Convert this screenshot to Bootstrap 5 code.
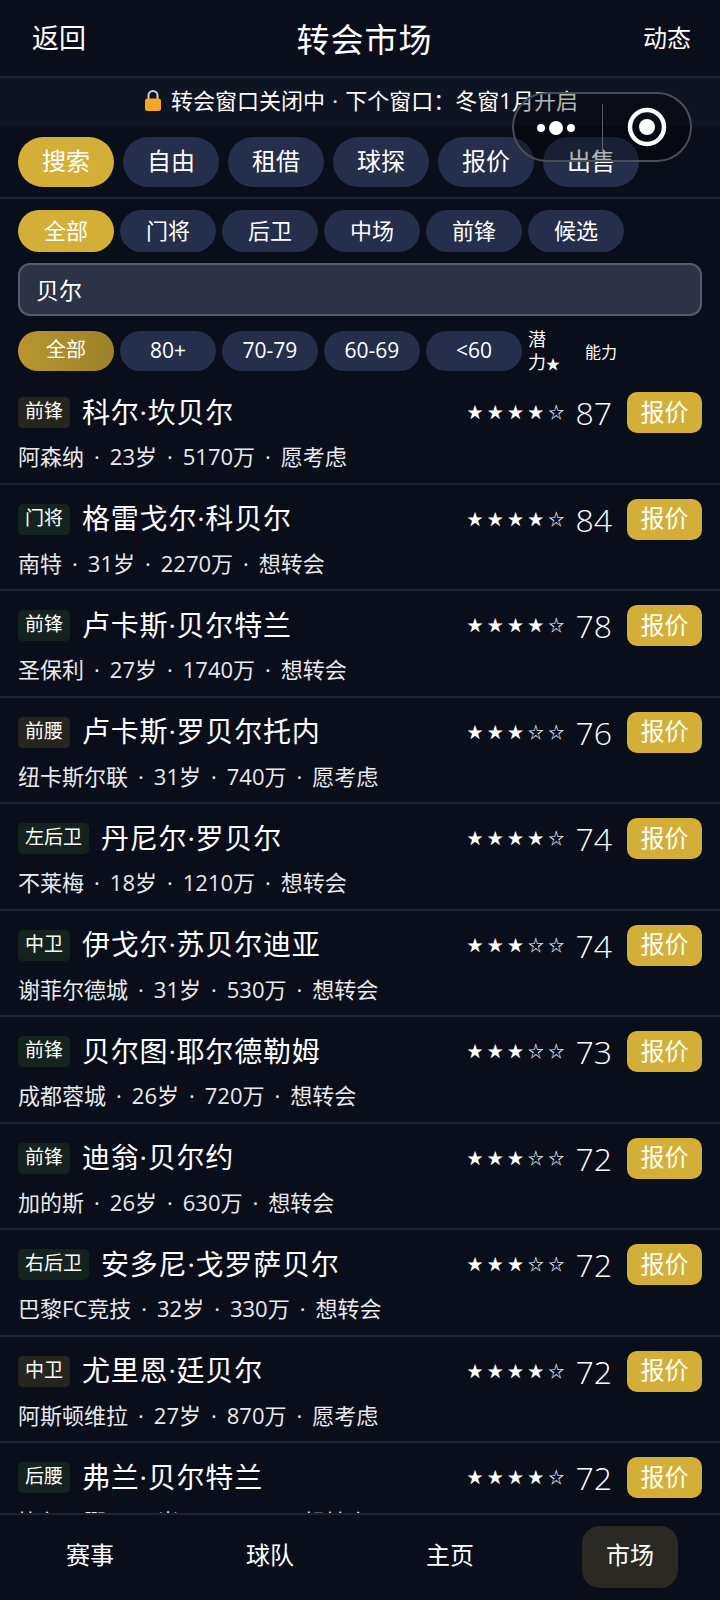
<!DOCTYPE html>
<html lang="zh-CN">
<head>
  <meta charset="UTF-8">
  <meta name="viewport" content="width=device-width, initial-scale=1">
  <title>转会市场</title>
  <link href="https://cdn.jsdelivr.net/npm/bootstrap@5.3.0/dist/css/bootstrap.min.css" rel="stylesheet">
  <style>
    body { background: #0a0e1a; color: #fff; font-family: "Open Sans", "Noto Sans CJK SC", sans-serif; height: 1600px; overflow: hidden; }
    .app-shell { height: 1600px; position: relative; }
    .top-bar { height: 78px; padding: 0 29px 0 32px; border-bottom: 2px solid #1c2233; }
    .top-bar .back { font-size: 27px; }
    .top-bar .title { font-size: 33px; letter-spacing: 1px; padding-top: 3px; }
    .top-bar .news { font-size: 24px; }
    .closed-bar { height: 48px; padding: 0 0 3px 3px; background: #0f1423; font-size: 22px; }
    .closed-bar svg { margin-right: 10px; }
    .closed-bar i { font-style: normal; margin: 0 1.5px; }
    .main-tabs { padding: 11px 18px 10px; gap: 9px; border-bottom: 2px solid #1c2233; }
    .pill-btn { width: 96px; border: 0; border-radius: 25px; background: #252e4a; color: #fff; padding: 0; line-height: 1; }
    .main-tabs .pill-btn { height: 50px; font-size: 24px; padding-bottom: 3px; }
    .pos-tabs { padding: 11px 18px 0; gap: 6px; }
    .pos-tabs .pill-btn { height: 42px; font-size: 22px; border-radius: 21px; padding-bottom: 3px; }
    .pill-btn.on { background: #d4af37; }
    .search-wrap { padding: 11px 18px 0; }
    .search-box { height: 53px; background: #2d3344; border: 2px solid #555b6b; border-radius: 12px; color: #fff; font-size: 23px; padding: 0 16px 2px; }
    .search-box:focus { background: #2d3344; color: #fff; border-color: #555b6b; box-shadow: none; }
    .rate-tabs { padding: 15px 18px 0; gap: 6px; height: 56px; }
    .rate-tabs .pill-btn { height: 40px; font-size: 21px; border-radius: 20px; padding-bottom: 2px; }
    .rate-tabs .pill-btn.on { background: linear-gradient(90deg, #b8962f, #9c8228); font-size: 20px; }
    .sort-a { width: 35px; font-size: 18px; line-height: 23px; white-space: nowrap; margin-top: -3px; }
    .sort-a small { font-size: 14px; }
    .sort-b { margin-left: 16px; font-size: 16px; }
    .plist { flex: 1 1 0; min-height: 0; overflow: hidden; padding-top: 6px; }
    .prow { height: 106.5px; padding: 14px 18px 0; border-bottom: 2px solid #1c2233; }
    .pos-tag { height: 31px; padding: 0 7px; border-radius: 5px; font-size: 19px; line-height: 29px; white-space: nowrap; }
    .tag-want { background: #15231f; }
    .tag-maybe { background: #27251f; }
    .pname { font-size: 28px; letter-spacing: .8px; margin-left: 12px; line-height: 37px; padding-bottom: 1px; }
    .pstars { font-size: 16px; letter-spacing: 4.3px; line-height: 41px; }
    .pval { font-size: 32px; font-weight: 300; line-height: 41px; margin-left: 7px; }
    .offer-btn { width: 75px; height: 41px; margin-left: 15px; background: #d4af37; color: #fff; border: 0; border-radius: 10px; padding: 0 0 2px; font-size: 24px; line-height: 1; }
    .pmeta { margin-top: 7px; font-size: 22px; line-height: 32px; color: #e9e9ec; }
    .pmeta i { font-style: normal; margin: 0 10px; }
    .bottom-nav { height: 87px; padding-top: 11px; background: #0a0e1a; border-top: 2px solid #1c2233; }
    .bottom-nav .col { display: flex; justify-content: center; }
    .nav-slot { width: 96px; height: 62px; border-radius: 18px; font-size: 24px; padding-bottom: 4px; }
    .nav-slot.on { background: #2b2923; }
    .capsule { position: absolute; left: 512px; top: 92px; width: 180px; height: 70px; border-radius: 35px; border: 2px solid #4a4e58; background: rgba(0,0,0,.3); }
    .capsule .cap-line { position: absolute; left: 88px; top: 10px; height: 46px; width: 1px; background: #5a5e68; }
    .capsule svg { position: absolute; }
    .cap-dots { left: 22px; top: 24px; }
    .cap-ring { left: 113px; top: 13px; }
  </style>
</head>
<body>
  <div class="app-shell d-flex flex-column">

    <div class="top-bar d-flex align-items-center justify-content-between">
      <span class="back">返回</span>
      <span class="title">转会市场</span>
      <span class="news">动态</span>
    </div>

    <div class="closed-bar d-flex align-items-center justify-content-center">
      <svg width="16" height="21" viewBox="0 0 16 21"><path d="M3.5 10V5.5a4.5 4.5 0 0 1 9 0V10" fill="none" stroke="#c9ccd2" stroke-width="2"/><rect x="0" y="8.5" width="16" height="12.5" rx="2.5" fill="#f5a623"/></svg>
      <span>转会窗口关闭中<i> · </i>下个窗口：冬窗1月开启</span>
    </div>

    <div class="main-tabs d-flex">
      <button class="pill-btn on">搜索</button>
      <button class="pill-btn">自由</button>
      <button class="pill-btn">租借</button>
      <button class="pill-btn">球探</button>
      <button class="pill-btn">报价</button>
      <button class="pill-btn">出售</button>
    </div>

    <div class="pos-tabs d-flex">
      <button class="pill-btn on">全部</button>
      <button class="pill-btn">门将</button>
      <button class="pill-btn">后卫</button>
      <button class="pill-btn">中场</button>
      <button class="pill-btn">前锋</button>
      <button class="pill-btn">候选</button>
    </div>

    <div class="search-wrap">
      <input class="form-control search-box" type="text" value="贝尔">
    </div>

    <div class="rate-tabs d-flex align-items-start">
      <button class="pill-btn on">全部</button>
      <button class="pill-btn">80+</button>
      <button class="pill-btn">70-79</button>
      <button class="pill-btn">60-69</button>
      <button class="pill-btn">&lt;60</button>
      <span class="sort-a">潜<br>力<small>★</small></span>
      <span class="sort-b align-self-center">能力</span>
    </div>

    <div class="plist" id="plist"></div>

    <div class="bottom-nav row g-0">
      <div class="col"><div class="nav-slot d-flex align-items-center justify-content-center">赛事</div></div>
      <div class="col"><div class="nav-slot d-flex align-items-center justify-content-center">球队</div></div>
      <div class="col"><div class="nav-slot d-flex align-items-center justify-content-center">主页</div></div>
      <div class="col"><div class="nav-slot on d-flex align-items-center justify-content-center">市场</div></div>
    </div>

    <div class="capsule">
      <svg class="cap-dots" width="40" height="20" viewBox="0 0 40 20"><circle cx="5" cy="10" r="4" fill="#fff"/><circle cx="20" cy="10" r="7" fill="#fff"/><circle cx="35" cy="10" r="4" fill="#fff"/></svg>
      <div class="cap-line"></div>
      <svg class="cap-ring" width="40" height="40" viewBox="0 0 40 40"><circle cx="20" cy="20" r="17" fill="none" stroke="#fff" stroke-width="4.5"/><circle cx="20" cy="20" r="8" fill="#fff"/></svg>
    </div>
  </div>

  <script>
    const jogadores = [
      ["前锋", "科尔·坎贝尔", 4, 87, "阿森纳", 23, 5170, "愿考虑"],
      ["门将", "格雷戈尔·科贝尔", 4, 84, "南特", 31, 2270, "想转会"],
      ["前锋", "卢卡斯·贝尔特兰", 4, 78, "圣保利", 27, 1740, "想转会"],
      ["前腰", "卢卡斯·罗贝尔托内", 3, 76, "纽卡斯尔联", 31, 740, "愿考虑"],
      ["左后卫", "丹尼尔·罗贝尔", 4, 74, "不莱梅", 18, 1210, "想转会"],
      ["中卫", "伊戈尔·苏贝尔迪亚", 3, 74, "谢菲尔德城", 31, 530, "想转会"],
      ["前锋", "贝尔图·耶尔德勒姆", 3, 73, "成都蓉城", 26, 720, "想转会"],
      ["前锋", "迪翁·贝尔约", 3, 72, "加的斯", 26, 630, "想转会"],
      ["右后卫", "安多尼·戈罗萨贝尔", 3, 72, "巴黎FC竞技", 32, 330, "想转会"],
      ["中卫", "尤里恩·廷贝尔", 4, 72, "阿斯顿维拉", 27, 870, "愿考虑"],
      ["后腰", "弗兰·贝尔特兰", 4, 72, "毕尔巴鄂", 26, 1480, "想转会"]
    ];

    // monta as linhas
    document.getElementById("plist").innerHTML = jogadores.map(j => `
      <div class="prow">
        <div class="d-flex align-items-center">
          <span class="pos-tag ${j[7] === "愿考虑" ? "tag-maybe" : "tag-want"}">${j[0]}</span>
          <span class="pname flex-grow-1">${j[1]}</span>
          <span class="pstars">${"★".repeat(j[2])}${"☆".repeat(5 - j[2])}</span>
          <span class="pval">${j[3]}</span>
          <button class="offer-btn">报价</button>
        </div>
        <div class="pmeta">${j[4]}<i>·</i>${j[5]}岁<i>·</i>${j[6]}万<i>·</i>${j[7]}</div>
      </div>`).join("");
  </script>
  <script src="https://cdn.jsdelivr.net/npm/bootstrap@5.3.0/dist/js/bootstrap.bundle.min.js"></script>
</body>
</html>
